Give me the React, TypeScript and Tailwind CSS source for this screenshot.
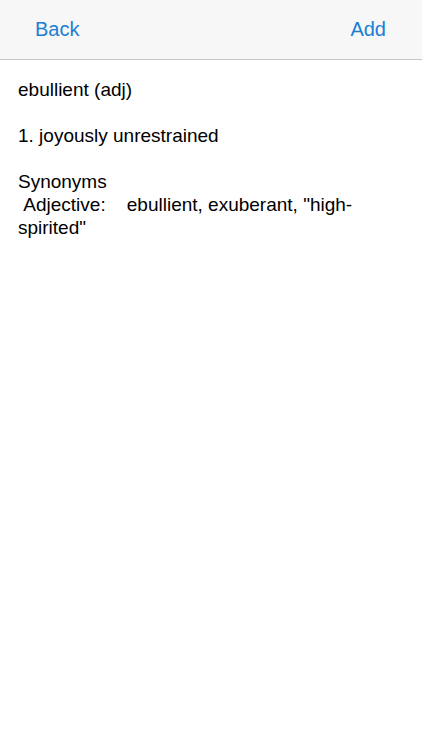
import React from 'react';

function App() {
  return (
    <div className="min-h-screen w-full bg-white" style={{ fontFamily: '"Liberation Sans", Arial, sans-serif' }}>
      <div className="flex h-[60px] items-center justify-between border-b border-[#c8c7cc] bg-[#f7f7f8] px-[35px] pb-[2px]">
        <span className="text-[20px] text-[#1a7fd4]">Back</span>
        <span className="text-[20px] text-[#1a7fd4] mr-[1px]">Add</span>
      </div>
      <div className="pl-[18px] pr-[40px] pt-[18px] text-[19px] leading-[23px] text-black whitespace-pre-wrap">
        {'ebullient (adj)\n\n1. joyously unrestrained\n\nSynonyms\n Adjective:    ebullient, exuberant, "high-spirited"'}
      </div>
    </div>
  );
}

export default App;
